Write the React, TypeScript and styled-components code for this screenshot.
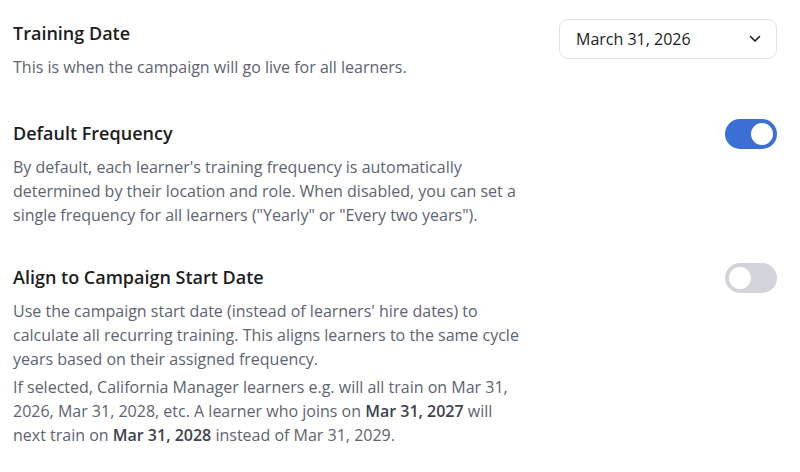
import React, { useState } from 'react';
import styled, { createGlobalStyle } from 'styled-components';

const GlobalStyle = createGlobalStyle`
  html, body {
    margin: 0;
    padding: 0;
    background: #fff;
  }
  body {
    font-family: "Open Sans", Lato, sans-serif;
    -webkit-font-smoothing: antialiased;
  }
`;

const Page = styled.div`
  padding: 19px 23px 0 13px;
  display: flex;
  flex-direction: column;
`;

const Section = styled.div<{ $spaceAfter: number }>`
  display: flex;
  justify-content: space-between;
  align-items: flex-start;
  gap: 24px;
  margin-bottom: ${p => p.$spaceAfter}px;
`;

const TextCol = styled.div`
  max-width: 512px;
`;

const Title = styled.h3`
  margin: 0;
  font-size: 18px;
  line-height: 28px;
  font-weight: 600;
  color: #1c1d21;
`;

const Desc = styled.p`
  margin: 8px 0 0;
  font-size: 16px;
  line-height: 24px;
  color: #5d6373;

  & + & {
    margin-top: 4px;
  }

  strong {
    font-weight: 600;
    color: #3e4350;
  }
`;

const SelectBox = styled.button`
  width: 218px;
  height: 40px;
  box-sizing: border-box;
  display: flex;
  align-items: center;
  justify-content: space-between;
  padding: 0 15px 0 16px;
  background: #fff;
  border: 1px solid #e2e3e6;
  border-radius: 9px;
  font-family: inherit;
  font-size: 16px;
  color: #1c1d21;
  cursor: pointer;
`;

const Track = styled.button<{ $on: boolean }>`
  position: relative;
  flex: none;
  width: 52px;
  height: 30px;
  padding: 0;
  border: none;
  border-radius: 15px;
  background: ${p => (p.$on ? '#3b6fd6' : '#d3d4d9')};
  cursor: pointer;
`;

const Knob = styled.span<{ $on: boolean }>`
  position: absolute;
  top: 2px;
  left: ${p => (p.$on ? '24px' : '2px')};
  width: 26px;
  height: 26px;
  box-sizing: border-box;
  border-radius: 50%;
  background: #fff;
  border: 2px solid ${p => (p.$on ? '#3b6fd6' : '#d3d4d9')};
  transition: left 0.15s;
`;

const Chevron = () => (
  <svg width="12" height="8" viewBox="0 0 12 8" fill="none">
    <path d="M1.5 1.5 L6 6 L10.5 1.5" stroke="#1c1d21" strokeWidth="1.6" strokeLinecap="round" strokeLinejoin="round" />
  </svg>
);

const Toggle: React.FC<{ on: boolean; onChange: () => void }> = ({ on, onChange }) => (
  <Track $on={on} onClick={onChange} aria-pressed={on}>
    <Knob $on={on} />
  </Track>
);

export default function App() {
  const [defaultFreq, setDefaultFreq] = useState(true);
  const [alignStart, setAlignStart] = useState(false);

  return (
    <>
      <GlobalStyle />
      <Page>
        <Section $spaceAfter={40}>
          <TextCol>
            <Title>Training Date</Title>
            <Desc>This is when the campaign will go live for all learners.</Desc>
          </TextCol>
          <SelectBox>
            March 31, 2026
            <Chevron />
          </SelectBox>
        </Section>

        <Section $spaceAfter={36}>
          <TextCol>
            <Title>Default Frequency</Title>
            <Desc>
              By default, each learner's training frequency is automatically determined by their
              location and role. When disabled, you can set a single frequency for all learners
              ("Yearly" or "Every two years").
            </Desc>
          </TextCol>
          <Toggle on={defaultFreq} onChange={() => setDefaultFreq(!defaultFreq)} />
        </Section>

        <Section $spaceAfter={0}>
          <TextCol>
            <Title>Align to Campaign Start Date</Title>
            <Desc>
              Use the campaign start date (instead of learners' hire dates) to calculate all
              recurring training. This aligns learners to the same cycle years based on their
              assigned frequency.
            </Desc>
            <Desc>
              If selected, California Manager learners e.g. will all train on Mar 31, 2026, Mar 31,
              2028, etc. A learner who joins on <strong>Mar 31, 2027</strong> will next train on{' '}
              <strong>Mar 31, 2028</strong> instead of Mar 31, 2029.
            </Desc>
          </TextCol>
          <Toggle on={alignStart} onChange={() => setAlignStart(!alignStart)} />
        </Section>
      </Page>
    </>
  );
}
